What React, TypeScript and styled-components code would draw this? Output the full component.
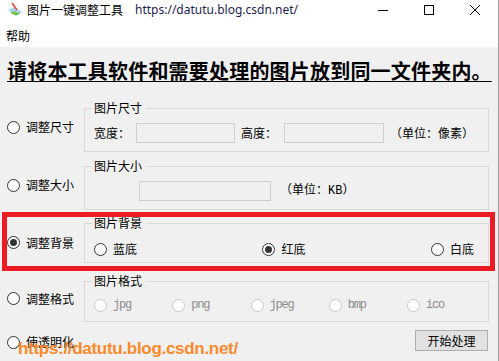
import styled, { createGlobalStyle } from "styled-components";

const GlobalStyle = createGlobalStyle`
  html, body {
    margin: 0;
    padding: 0;
    background: #f0f0f0;
  }
  body {
    font-family: "Noto Sans CJK SC", "Noto Sans", sans-serif;
    font-size: 12px;
    color: #000;
  }
`;

const Window = styled.div`
  position: relative;
  width: 498px;
  height: 361px;
  border-right: 1px solid #a3a3a3;
  background: #f0f0f0;
  overflow: hidden;
`;

// 标题栏
const TitleBar = styled.div`
  display: flex;
  align-items: center;
  height: 20px;
  padding-left: 7px;
  background: #fff;
`;

const Title = styled.span`
  margin-left: 4px;
  line-height: 14px;
`;

const TitleUrl = styled.span`
  margin-left: 12px;
  font-family: "Noto Sans", sans-serif;
  line-height: 14px;
  color: #1d1d4f;
`;

const Controls = styled.div`
  display: flex;
  margin-left: auto;
`;

const ControlButton = styled.div`
  display: flex;
  align-items: center;
  justify-content: center;
  width: 46px;
  height: 20px;
`;

const MenuBar = styled.div`
  height: 27px;
  box-sizing: border-box;
  padding: 9px 6px 0;
  background: #fff;
  line-height: 14px;
`;

// 内容
const Content = styled.div`
  padding: 0 9px 0 7px;
`;

const Heading = styled.h1`
  margin: 12px 0 18px;
  font-size: 20px;
  font-weight: 700;
  line-height: 24px;
  letter-spacing: 0.2px;
  text-decoration: underline;
  text-decoration-thickness: 1px;
  text-underline-offset: 2px;
  white-space: nowrap;
`;

const Row = styled.div<{ $gap: number }>`
  display: flex;
  align-items: center;
  margin-bottom: ${(p) => p.$gap}px;
`;

const RadioCol = styled.div`
  width: 77px;
  padding-top: 3px;
`;

const Group = styled.fieldset<{ $pt: number; $pb: number }>`
  width: 405px;
  box-sizing: border-box;
  margin: 0;
  min-width: 0;
  padding: ${(p) => `${p.$pt}px 14px ${p.$pb}px 9px`};
  border: 1px solid #d9d9d9;
`;

const Legend = styled.legend`
  margin-left: -2px;
  padding: 0 4px 0 2px;
  line-height: 14px;
`;

const Radio = styled.label<{ $disabled?: boolean }>`
  display: inline-flex;
  align-items: center;
  gap: 6px;
  line-height: 14px;
  white-space: nowrap;
  color: ${(p) => (p.$disabled ? "#8c8c8c" : "#000")};
`;

const Circle = styled.span<{ $checked?: boolean; $disabled?: boolean }>`
  display: inline-flex;
  align-items: center;
  justify-content: center;
  flex-shrink: 0;
  width: 13px;
  height: 13px;
  box-sizing: border-box;
  border-radius: 50%;
  border: 1px solid ${(p) => (p.$disabled ? "#c8c8c8" : "#333")};
  background: #fff;
  &::after {
    content: "";
    display: ${(p) => (p.$checked ? "block" : "none")};
    width: 7px;
    height: 7px;
    border-radius: 50%;
    background: #333;
  }
`;

const Line = styled.div<{ $indent?: number }>`
  display: flex;
  align-items: center;
  padding-left: ${(p) => p.$indent ?? 0}px;
  line-height: 14px;
  white-space: nowrap;
`;

const Label = styled.span<{ $ml?: number }>`
  margin-left: ${(p) => p.$ml ?? 0}px;
`;

const Field = styled.div<{ $w: number; $ml?: number }>`
  width: ${(p) => p.$w}px;
  height: 20px;
  box-sizing: border-box;
  margin-left: ${(p) => p.$ml ?? 0}px;
  border: 1px solid #cfcfcf;
  background: #f0f0f0;
`;

const Unit = styled.span<{ $ml: number }>`
  margin-left: ${(p) => p.$ml}px;
  font-family: "Liberation Mono", "Noto Sans CJK SC", monospace;
`;

const BgOptions = styled.div`
  display: flex;
  justify-content: space-between;
`;

const FormatGrid = styled.div`
  display: grid;
  grid-template-columns: repeat(5, 78.25px);
`;

const Mono = styled.span`
  font-family: "Liberation Mono", monospace;
  letter-spacing: -1.2px;
`;

const BottomRow = styled.div`
  display: flex;
  align-items: center;
  justify-content: space-between;
  margin-top: 8px;
  padding-top: 3px;
`;

const Button = styled.button`
  width: 73px;
  height: 21px;
  margin-top: -3px;
  margin-right: 1px;
  padding: 0;
  border: 1px solid #adadad;
  background: #e1e1e1;
  font-family: "Noto Sans CJK SC", sans-serif;
  font-size: 12px;
  line-height: 14px;
  color: #000;
`;

// 红框和水印是截图上的标注
const Highlight = styled.div`
  position: absolute;
  left: 2px;
  top: 212px;
  width: 493px;
  height: 59px;
  box-sizing: border-box;
  border: 5px solid #ed1c24;
  pointer-events: none;
`;

const Watermark = styled.div`
  position: absolute;
  left: 18px;
  top: 339px;
  font-family: "Liberation Sans", Arial, sans-serif;
  font-weight: 700;
  font-size: 17px;
  letter-spacing: -0.3px;
  line-height: 20px;
  color: #fb8a2c;
  white-space: nowrap;
`;

function AppIcon() {
  return (
    <svg width="16" height="16" viewBox="0 0 16 16">
      <polygon points="1,8 7,5 15,10 9,14" fill="#a5d6f0" />
      <polygon points="3,11 7,9 13,11.5 9,13.5" fill="#7cbf4c" />
      <line x1="5" y1="1" x2="10" y2="8" stroke="#e4473f" strokeWidth="1.6" />
    </svg>
  );
}

function RadioItem({
  label,
  checked,
  disabled,
  mono,
}: {
  label: string;
  checked?: boolean;
  disabled?: boolean;
  mono?: boolean;
}) {
  return (
    <Radio $disabled={disabled}>
      <Circle $checked={checked} $disabled={disabled} />
      {mono ? <Mono>{label}</Mono> : <span>{label}</span>}
    </Radio>
  );
}

export default function App() {
  return (
    <Window>
      <GlobalStyle />
      <TitleBar>
        <AppIcon />
        <Title>图片一键调整工具</Title>
        <TitleUrl>https://datutu.blog.csdn.net/</TitleUrl>
        <Controls>
          <ControlButton>
            <svg width="10" height="10" viewBox="0 0 10 10">
              <line x1="0" y1="5.5" x2="10" y2="5.5" stroke="#000" strokeWidth="1" />
            </svg>
          </ControlButton>
          <ControlButton>
            <svg width="10" height="10" viewBox="0 0 10 10">
              <rect x="0.5" y="0.5" width="9" height="9" fill="none" stroke="#000" strokeWidth="1" />
            </svg>
          </ControlButton>
          <ControlButton>
            <svg width="10" height="10" viewBox="0 0 10 10">
              <path d="M0 0 L10 10 M10 0 L0 10" stroke="#000" strokeWidth="1" />
            </svg>
          </ControlButton>
        </Controls>
      </TitleBar>
      <MenuBar>帮助</MenuBar>

      <Content>
        <Heading>请将本工具软件和需要处理的图片放到同一文件夹内。</Heading>

        <Row $gap={7}>
          <RadioCol>
            <RadioItem label="调整尺寸" />
          </RadioCol>
          <Group $pt={8} $pb={8}>
            <Legend>图片尺寸</Legend>
            <Line>
              <Label>宽度：</Label>
              <Field $w={102} $ml={6} />
              <Label $ml={6}>高度：</Label>
              <Field $w={103} $ml={7} />
              <Label $ml={6}>（单位：像素）</Label>
            </Line>
          </Group>
        </Row>

        <Row $gap={6}>
          <RadioCol>
            <RadioItem label="调整大小" />
          </RadioCol>
          <Group $pt={8} $pb={8}>
            <Legend>图片大小</Legend>
            <Line $indent={45}>
              <Field $w={132} />
              <Unit $ml={9}>（单位：KB）</Unit>
            </Line>
          </Group>
        </Row>

        <Row $gap={11}>
          <RadioCol>
            <RadioItem label="调整背景" checked />
          </RadioCol>
          <Group $pt={12} $pb={6}>
            <Legend>图片背景</Legend>
            <BgOptions>
              <RadioItem label="蓝底" />
              <RadioItem label="红底" checked />
              <RadioItem label="白底" />
            </BgOptions>
          </Group>
        </Row>

        <Row $gap={0}>
          <RadioCol>
            <RadioItem label="调整格式" />
          </RadioCol>
          <Group $pt={10} $pb={9}>
            <Legend>图片格式</Legend>
            <FormatGrid>
              {["jpg", "png", "jpeg", "bmp", "ico"].map((f) => (
                <RadioItem key={f} label={f} disabled mono />
              ))}
            </FormatGrid>
          </Group>
        </Row>

        <BottomRow>
          <RadioItem label="使透明化" />
          <Button>开始处理</Button>
        </BottomRow>
      </Content>

      <Highlight />
      <Watermark>https://datutu.blog.csdn.net/</Watermark>
    </Window>
  );
}
